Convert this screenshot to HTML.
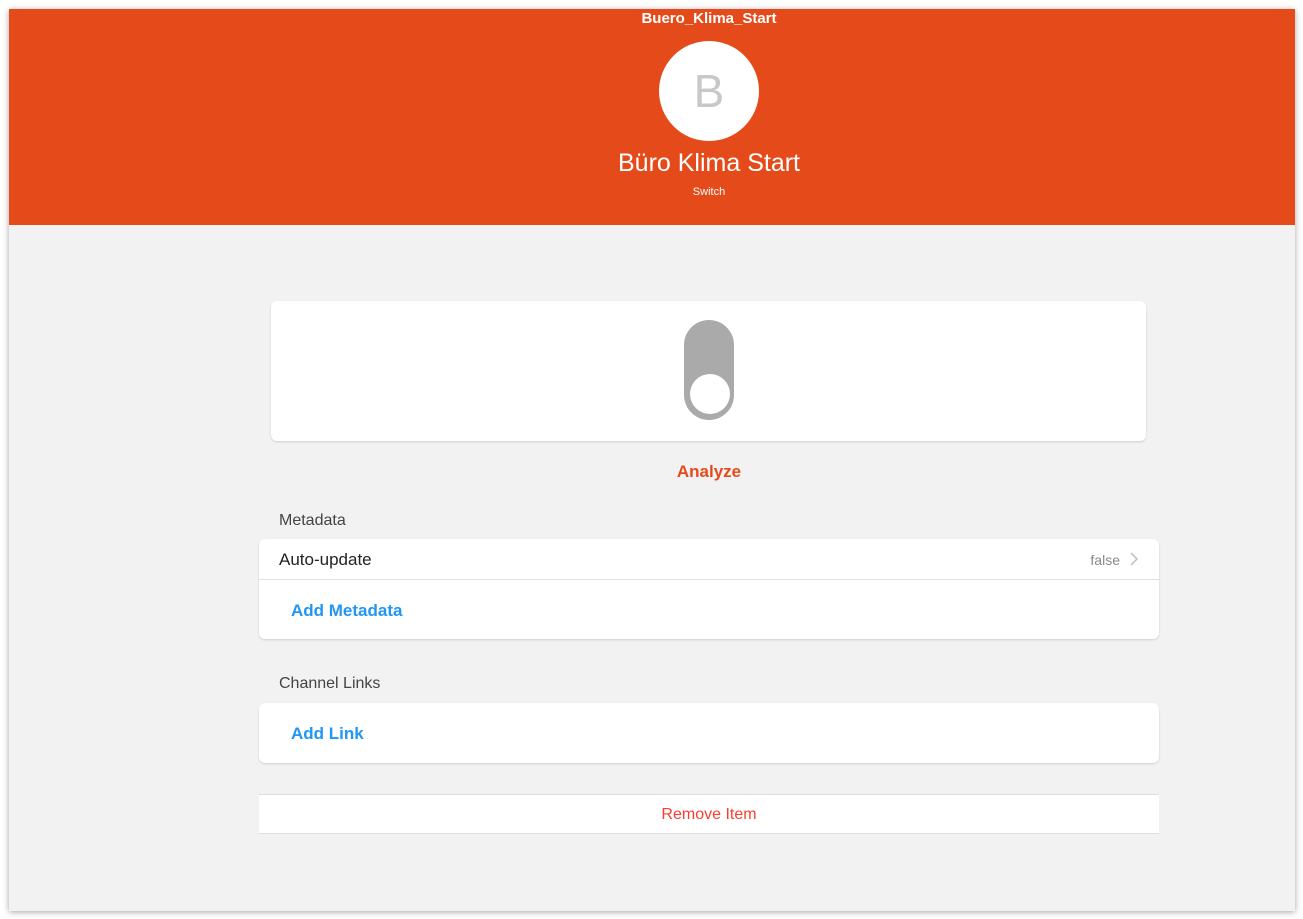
<!DOCTYPE html>
<html><head><meta charset="utf-8"><style>
*{margin:0;padding:0;box-sizing:border-box}
body{width:1303px;height:919px;background:#fff;font-family:"Liberation Sans",sans-serif;position:relative;overflow:hidden}
#page{position:absolute;left:9px;top:9px;width:1286px;height:902px;background:#f2f2f2;box-shadow:0 1px 6px rgba(0,0,0,.35);overflow:hidden}
.hdr{position:absolute;left:0;top:0;width:1286px;height:216px;background:#e54b1a;color:#fff;text-align:center}
.abs{position:absolute}
.ctr{position:absolute;left:0;width:1400px;text-align:center}
.card{position:absolute;background:#fff;border-radius:6px;box-shadow:0 1px 2px rgba(0,0,0,.15)}
.lbl{position:absolute;left:270px;font-size:16px;color:#444}
.blue{color:#2196f3;font-weight:bold;font-size:17px;position:absolute;left:32px}
</style></head><body>
<div id="page">
<div class="hdr">
<div class="ctr" style="top:1px;font-weight:bold;font-size:15px;line-height:18px">Buero_Klima_Start</div>
<div class="abs" style="left:650px;top:32px;width:100px;height:100px;border-radius:50%;background:#fff;color:#c8c8c8;font-size:46px;line-height:100px">B</div>
<div class="ctr" style="top:139px;font-size:25px;line-height:30px">Büro Klima Start</div>
<div class="ctr" style="top:176px;font-size:11px;line-height:14px">Switch</div>
</div>
<div class="card" style="left:262px;top:292px;width:875px;height:140px">
<div class="abs" style="left:413px;top:19px;width:50px;height:100px;border-radius:25px;background:#aaa">
<div class="abs" style="left:6px;top:54px;width:40px;height:40px;border-radius:50%;background:#fff"></div>
</div>
</div>
<div class="ctr" style="top:453px;font-size:17px;color:#e54b1a;font-weight:bold">Analyze</div>
<div class="lbl" style="top:503px">Metadata</div>
<div class="card" style="left:250px;top:530px;width:900px;height:100px">
<div class="abs" style="left:20px;top:11px;font-size:17px;color:#222">Auto-update</div>
<div class="abs" style="right:39px;top:13px;font-size:14px;color:#888">false</div>
<svg class="abs" style="right:21px;top:13px" width="8" height="14" viewBox="0 0 8 14"><path d="M1 1l6 6-6 6" fill="none" stroke="#c4c4c4" stroke-width="1.6"/></svg>
<div class="abs" style="left:0;top:40px;width:900px;height:1px;background:#e0e0e0"></div>
<div class="blue" style="top:62px">Add Metadata</div>
</div>
<div class="lbl" style="top:666px">Channel Links</div>
<div class="card" style="left:250px;top:694px;width:900px;height:60px">
<div class="blue" style="top:21px">Add Link</div>
</div>
<div class="abs" style="left:250px;top:785px;width:900px;height:40px;background:#fff;border-top:1px solid #ddd;border-bottom:1px solid #ddd;text-align:center;color:#ff3b30;font-size:16px;line-height:40px">Remove Item</div>
</div>
</body></html>
